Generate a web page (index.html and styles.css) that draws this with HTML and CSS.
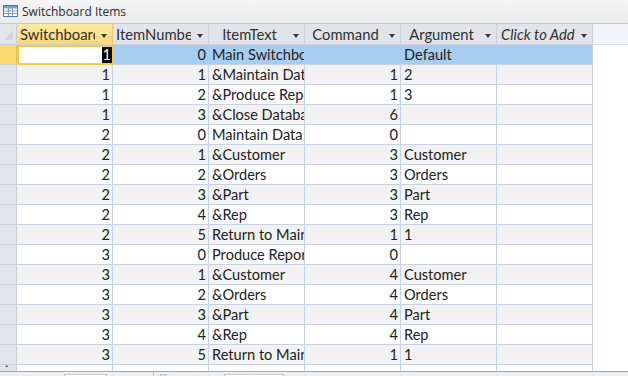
FILE: index.html
```html
<!DOCTYPE html>
<html>
<head>
<meta charset="utf-8">
<link rel="stylesheet" href="styles.css">
</head>
<body>
<div class="window">
  <div class="titlebar">
    <svg class="ticon" width="15" height="12" viewBox="0 0 15 12">
      <rect x="0.5" y="0.5" width="14" height="11" fill="#ffffff" stroke="#4a78b8"/>
      <rect x="1" y="1" width="13" height="2.5" fill="#7aa2d8"/>
      <line x1="1" y1="6" x2="14" y2="6" stroke="#7aa2d8"/>
      <line x1="1" y1="8.5" x2="14" y2="8.5" stroke="#7aa2d8"/>
      <line x1="5.5" y1="1" x2="5.5" y2="11" stroke="#7aa2d8"/>
      <line x1="9.5" y1="1" x2="9.5" y2="11" stroke="#7aa2d8"/>
    </svg>
    <span class="ttext">Switchboard Items</span>
  </div>
  <div class="grid">
    <div class="hsel"><svg width="10" height="11" viewBox="0 0 10 11"><polygon points="9,0 9,10 0,10" fill="#d2d6dc"/></svg></div>
    <div class="hcell active"><span class="lbl">Switchboard</span><span class="arr"></span></div>
    <div class="hcell"><span class="lbl">ItemNumber</span><span class="arr"></span></div>
    <div class="hcell"><span class="lbl">ItemText</span><span class="arr"></span></div>
    <div class="hcell"><span class="lbl">Command</span><span class="arr"></span></div>
    <div class="hcell"><span class="lbl">Argument</span><span class="arr"></span></div>
    <div class="hcell add"><span class="lbl">Click to Add</span><span class="arr"></span></div>
    <div class="hfill"></div>

    <div class="sel cur"></div>
    <div class="cell num row-sel curcell"><span class="hl">1</span></div>
    <div class="cell num row-sel">0</div>
    <div class="cell txt row-sel">Main Switchboard</div>
    <div class="cell num row-sel"></div>
    <div class="cell txt row-sel">Default</div>
    <div class="cell txt row-sel last"></div>
    <div class="fill"></div>

    <div class="sel"></div>
    <div class="cell num alt">1</div><div class="cell num alt">1</div><div class="cell txt alt">&amp;Maintain Data</div><div class="cell num alt">1</div><div class="cell txt alt">2</div><div class="cell alt"></div><div class="fill"></div>

    <div class="sel"></div>
    <div class="cell num">1</div><div class="cell num">2</div><div class="cell txt">&amp;Produce Reports</div><div class="cell num">1</div><div class="cell txt">3</div><div class="cell"></div><div class="fill"></div>

    <div class="sel"></div>
    <div class="cell num alt">1</div><div class="cell num alt">3</div><div class="cell txt alt">&amp;Close Database</div><div class="cell num alt">6</div><div class="cell txt alt"></div><div class="cell alt"></div><div class="fill"></div>

    <div class="sel"></div>
    <div class="cell num">2</div><div class="cell num">0</div><div class="cell txt">Maintain Data</div><div class="cell num">0</div><div class="cell txt"></div><div class="cell"></div><div class="fill"></div>

    <div class="sel"></div>
    <div class="cell num alt">2</div><div class="cell num alt">1</div><div class="cell txt alt">&amp;Customer</div><div class="cell num alt">3</div><div class="cell txt alt">Customer</div><div class="cell alt"></div><div class="fill"></div>

    <div class="sel"></div>
    <div class="cell num">2</div><div class="cell num">2</div><div class="cell txt">&amp;Orders</div><div class="cell num">3</div><div class="cell txt">Orders</div><div class="cell"></div><div class="fill"></div>

    <div class="sel"></div>
    <div class="cell num alt">2</div><div class="cell num alt">3</div><div class="cell txt alt">&amp;Part</div><div class="cell num alt">3</div><div class="cell txt alt">Part</div><div class="cell alt"></div><div class="fill"></div>

    <div class="sel"></div>
    <div class="cell num">2</div><div class="cell num">4</div><div class="cell txt">&amp;Rep</div><div class="cell num">3</div><div class="cell txt">Rep</div><div class="cell"></div><div class="fill"></div>

    <div class="sel"></div>
    <div class="cell num alt">2</div><div class="cell num alt">5</div><div class="cell txt alt">Return to Main</div><div class="cell num alt">1</div><div class="cell txt alt">1</div><div class="cell alt"></div><div class="fill"></div>

    <div class="sel"></div>
    <div class="cell num">3</div><div class="cell num">0</div><div class="cell txt">Produce Reports</div><div class="cell num">0</div><div class="cell txt"></div><div class="cell"></div><div class="fill"></div>

    <div class="sel"></div>
    <div class="cell num alt">3</div><div class="cell num alt">1</div><div class="cell txt alt">&amp;Customer</div><div class="cell num alt">4</div><div class="cell txt alt">Customer</div><div class="cell alt"></div><div class="fill"></div>

    <div class="sel"></div>
    <div class="cell num">3</div><div class="cell num">2</div><div class="cell txt">&amp;Orders</div><div class="cell num">4</div><div class="cell txt">Orders</div><div class="cell"></div><div class="fill"></div>

    <div class="sel"></div>
    <div class="cell num alt">3</div><div class="cell num alt">3</div><div class="cell txt alt">&amp;Part</div><div class="cell num alt">4</div><div class="cell txt alt">Part</div><div class="cell alt"></div><div class="fill"></div>

    <div class="sel"></div>
    <div class="cell num">3</div><div class="cell num">4</div><div class="cell txt">&amp;Rep</div><div class="cell num">4</div><div class="cell txt">Rep</div><div class="cell"></div><div class="fill"></div>

    <div class="sel"></div>
    <div class="cell num alt">3</div><div class="cell num alt">5</div><div class="cell txt alt">Return to Main</div><div class="cell num alt">1</div><div class="cell txt alt">1</div><div class="cell alt"></div><div class="fill"></div>

    <div class="sel newrow"><span class="star">*</span></div>
    <div class="cell newc"></div><div class="cell newc"></div><div class="cell newc"></div><div class="cell newc"></div><div class="cell newc"></div><div class="cell newc"></div><div class="fill newf"></div>
  </div>
  <div class="navbar">
    <div class="nbox b1"></div>
    <div class="nsep"></div>
    <div class="nbox b2"></div>
    <div class="nbox b3"></div>
  </div>
</div>
</body>
</html>
```
FILE: styles.css
```css
html, body {
  margin: 0;
  padding: 0;
  background: #ffffff;
}
.window {
  width: 628px;
  height: 376px;
  overflow: hidden;
  display: flex;
  flex-direction: column;
  font-family: "Lato", "Open Sans", sans-serif;
}
.titlebar {
  height: 23px;
  flex: none;
  border-bottom: 1px solid #c6c9ce;
  background: linear-gradient(#f4f4f5, #eaebec);
  display: flex;
  align-items: center;
  padding-left: 3px;
  box-sizing: content-box;
}
.ticon {
  margin-right: 4px;
  margin-top: -1px;
}
.ttext {
  font-family: "Open Sans", "Noto Sans", sans-serif;
  font-size: 12px;
  color: #2b2b2b;
}
.grid {
  display: grid;
  grid-template-columns: 17px repeat(6, 96px) 1fr;
  grid-template-rows: 21px repeat(16, 20px) 6px;
  flex: none;
}
.grid > div {
  box-sizing: border-box;
}
.hsel {
  background: #e3e5ea;
  border-right: 1px solid #c9ced8;
  border-bottom: 1px solid #c9ced8;
  display: flex;
  align-items: flex-end;
  justify-content: flex-end;
  padding: 0 2px 3px 0;
}
.hsel svg { display: block; }
.hcell {
  background: #e1e4ea;
  border-right: 1px solid #c9cfdb;
  border-bottom: 1px solid #c9cfdb;
  display: flex;
  align-items: center;
  padding-left: 3px;
  font-size: 14.8px;
  color: #303030;
  overflow: hidden;
}
.hcell.active {
  background: linear-gradient(#fdeaa5, #fad874);
  border-right-color: #e7c870;
}
.hcell .lbl {
  flex: 1;
  min-width: 0;
  white-space: nowrap;
  overflow: hidden;
  text-align: center;
}
.hcell.add .lbl {
  font-style: italic;
  text-align: left;
  padding-left: 1px;
}
.hcell .arr {
  flex: none;
  width: 17px;
  height: 21px;
  position: relative;
}
.hcell .arr::after {
  content: "";
  position: absolute;
  left: 6px;
  top: 10px;
  border-left: 3.5px solid transparent;
  border-right: 3.5px solid transparent;
  border-top: 4px solid #3a3a3a;
}
.hfill {
  background: #f4f5fa;
  border-bottom: 1px solid #d4d9e4;
}
.sel {
  background: #e3e5ea;
  border-right: 1px solid #c9ced8;
  border-bottom: 1px solid #c9ced8;
}
.sel.cur {
  background: #fadb6f;
  border-right-color: #e8c35a;
}
.cell {
  border-right: 1px solid #c8d2e6;
  border-bottom: 1px solid #c8d2e6;
  font-size: 14.6px;
  color: #222222;
  white-space: nowrap;
  overflow: hidden;
  line-height: 20px;
  background: #ffffff;
}
.cell.alt {
  background: #f2f2f2;
}
.cell.num {
  text-align: right;
  padding-right: 2px;
}
.cell.txt {
  padding-left: 3px;
}
.cell.row-sel {
  background: #a7cdf0;
  border-right-color: #a7cdf0;
  border-bottom-color: #c8d2e6;
}
.cell.row-sel.last {
  border-right-color: #c8d2e6;
}
.cell.curcell {
  background: #ffffff;
  border: 2px solid #f4ca4c;
  border-right: 1px solid #f4ca4c;
  line-height: 16px;
  padding-right: 0;
}
.hl {
  background: #000000;
  color: #ffffff;
  display: inline-block;
  padding: 0 1px;
  height: 16px;
  line-height: 16px;
}
.fill {
  background: #ffffff;
}
.newrow {
  border-bottom: none;
  position: relative;
}
.star {
  position: absolute;
  left: 5px;
  top: -2px;
  font-size: 8px;
  color: #333;
}
.newc {
  border-bottom: none;
}
.navbar {
  flex: 1;
  border-top: 1px solid #a4a7ad;
  background: #eeeff1;
  position: relative;
}
.nbox {
  position: absolute;
  top: 2px;
  height: 10px;
  background: #ffffff;
  border: 1px solid #c4c7cc;
}
.b1 { left: 64px; width: 41px; }
.b2 { left: 160px; width: 5px; background: #dcdde0; }
.b3 { left: 224px; width: 58px; }
.nsep {
  position: absolute;
  left: 153px;
  top: 0;
  width: 1px;
  height: 10px;
  background: #c4c7cc;
}
```
